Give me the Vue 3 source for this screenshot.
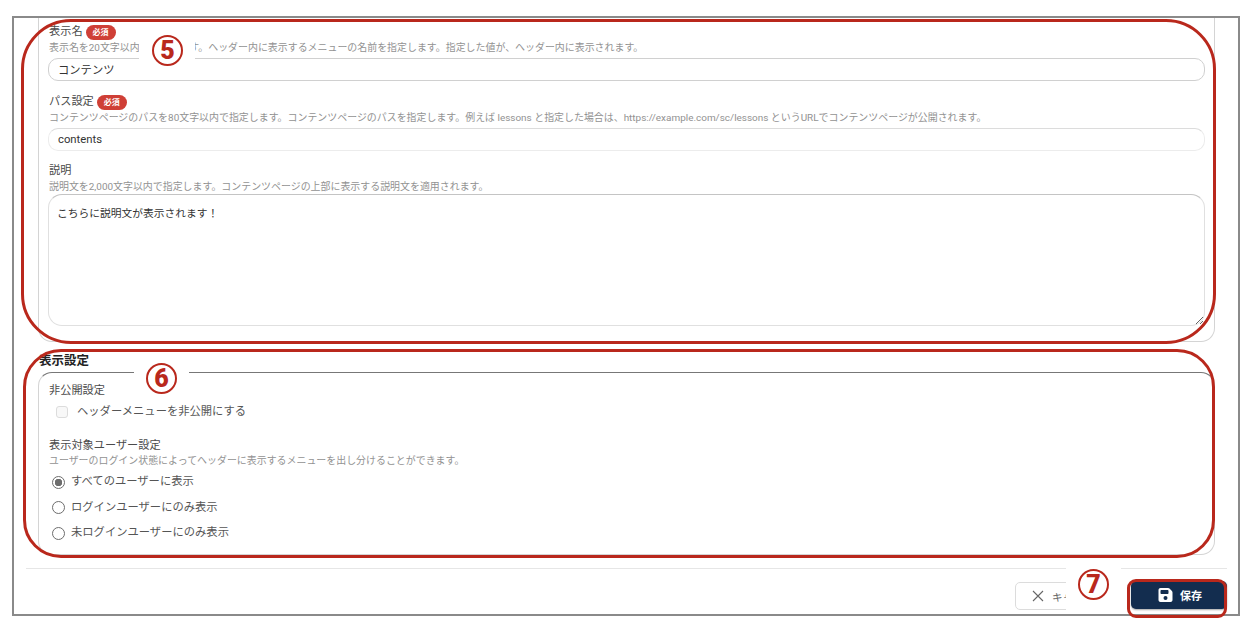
<template>
  <div class="page">
    <div class="frame">
      <section class="card card-top">
        <div class="field">
          <div class="label-row">
            <span class="label">表示名</span>
            <span class="badge">必須</span>
          </div>
          <p class="hint">表示名を20文字以内で指定します。ヘッダー内に表示するメニューの名前を指定します。指定した値が、ヘッダー内に表示されます。</p>
          <input class="text-input" type="text" value="コンテンツ" />
        </div>
        <div class="field">
          <div class="label-row">
            <span class="label">パス設定</span>
            <span class="badge">必須</span>
          </div>
          <p class="hint">コンテンツページのパスを80文字以内で指定します。コンテンツページのパスを指定します。例えば lessons と指定した場合は、https://example.com/sc/lessons というURLでコンテンツページが公開されます。</p>
          <input class="text-input faint" type="text" value="contents" />
        </div>
        <div class="field last">
          <div class="label-row">
            <span class="label">説明</span>
          </div>
          <p class="hint tight">説明文を2,000文字以内で指定します。コンテンツページの上部に表示する説明文を適用されます。</p>
          <textarea class="text-area" :value="description"></textarea>
        </div>
      </section>

      <h2 class="section-title">表示設定</h2>
      <section class="card card-bottom">
        <div class="label-row">
          <span class="label">非公開設定</span>
        </div>
        <div class="check-row">
          <span class="check"></span>
          <span class="option">ヘッダーメニューを非公開にする</span>
        </div>
        <div class="label-row target-label">
          <span class="label">表示対象ユーザー設定</span>
        </div>
        <p class="hint">ユーザーのログイン状態によってヘッダーに表示するメニューを出し分けることができます。</p>
        <div class="radio-list">
          <div class="radio-row" v-for="item in targets" :key="item.text">
            <span class="radio" :class="{ on: item.checked }"></span>
            <span class="option">{{ item.text }}</span>
          </div>
        </div>
      </section>

      <footer class="footer">
        <button class="btn cancel">
          <svg class="x-icon" viewBox="0 0 12 12"><path d="M1 1l10 10M11 1L1 11" /></svg>
          キャンセル
        </button>
        <button class="btn save">
          <svg class="save-icon" viewBox="0 0 448 512"><path d="M64 32C28.7 32 0 60.7 0 96V416c0 35.3 28.7 64 64 64H384c35.3 0 64-28.7 64-64V173.3c0-17-6.7-33.3-18.7-45.3L352 50.7C340 38.7 323.7 32 306.7 32H64zm0 96c0-17.7 14.3-32 32-32H288c17.7 0 32 14.3 32 32v64c0 17.7-14.3 32-32 32H96c-17.7 0-32-14.3-32-32V128zM224 288a64 64 0 1 1 0 128 64 64 0 1 1 0-128z" /></svg>
          保存
        </button>
      </footer>
    </div>

    <!-- annotations drawn over the screenshot -->
    <div class="mark box-five"></div>
    <div class="mark box-six"></div>
    <div class="mark box-seven"></div>
    <div class="mask mask-five"></div>
    <div class="mask mask-six"></div>
    <div class="mask mask-seven"></div>
    <span class="num num-five">5</span>
    <span class="num num-six">6</span>
    <span class="num num-seven">7</span>
  </div>
</template>

<script setup>
const description = 'こちらに説明文が表示されます！';
const targets = [
  { text: 'すべてのユーザーに表示', checked: true },
  { text: 'ログインユーザーにのみ表示', checked: false },
  { text: '未ログインユーザーにのみ表示', checked: false },
];
</script>

<style>
body {
  margin: 0;
  background: #fff;
}
</style>

<style scoped>
.page {
  position: relative;
  width: 1260px;
  height: 628px;
  overflow: hidden;
  padding: 16px 0 0 12px;
  box-sizing: border-box;
  font-family: Roboto, "Noto Sans CJK JP", sans-serif;
  color: #333;
}

.frame {
  width: 1228px;
  height: 600px;
  box-sizing: border-box;
  border: 2px solid #8a8a8a;
  padding: 0 11px 0 12px;
  overflow: hidden;
  background: #fff;
}

.card {
  margin: 0 12px;
  border: 1px solid #d4d4d4;
  box-sizing: border-box;
  padding: 0 9px 0 9px;
}

.card-top {
  height: 324px;
  padding-top: 5px;
  border-top: none;
  border-radius: 0 0 14px 14px;
}

.card-bottom {
  height: 183px;
  padding-top: 9px;
  border-top-color: #777;
  border-radius: 14px;
}

.field + .field {
  margin-top: 12px;
}

.field.last {
  margin-top: 11px;
}

.label-row {
  display: flex;
  align-items: center;
  gap: 3px;
  height: 16px;
  padding: 1px 0 0 1px;
}

.label {
  font-size: 11.2px;
  line-height: 16px;
  color: #4a4a4a;
}

.badge {
  flex: none;
  height: 15px;
  line-height: 15px;
  padding: 0 7px;
  border-radius: 8px;
  background: #cf3f36;
  color: #fff;
  font-size: 8px;
  font-weight: 700;
}

.hint {
  margin: 1px 0 3px;
  padding-left: 1px;
  font-size: 9.95px;
  line-height: 14px;
  color: #929292;
  white-space: nowrap;
}

.hint.tight {
  margin-bottom: 0;
}

.text-input {
  display: block;
  width: 100%;
  height: 23px;
  box-sizing: border-box;
  padding: 0 9px 2px;
  border: 1px solid #d0d0d0;
  border-radius: 10px;
  outline: none;
  background: #fff;
  font: 11.3px Roboto, "Noto Sans CJK JP", sans-serif;
  color: #333;
}

.text-input.faint {
  padding-bottom: 0;
  border-color: #ececec;
  border-top-color: #dcdcdc;
}

.text-area {
  display: block;
  width: 100%;
  height: 132px;
  box-sizing: border-box;
  padding: 11px 8px;
  border: 1px solid #e0e0e0;
  border-top-color: #c4c4c4;
  border-radius: 14px;
  outline: none;
  background: #fff;
  font: 10.75px/16px Roboto, "Noto Sans CJK JP", sans-serif;
  color: #333;
}

.section-title {
  margin: 12px 0 4px 13px;
  font-size: 12.5px;
  line-height: 14px;
  font-weight: 700;
  color: #222;
}

.check-row {
  display: flex;
  align-items: center;
  gap: 9px;
  height: 16px;
  margin: 5px 0 0 8px;
}

.check {
  width: 12px;
  height: 12px;
  box-sizing: border-box;
  border: 1px solid #dcdcdc;
  border-radius: 3px;
  background: #f8f8f8;
}

.option {
  font-size: 11.3px;
  line-height: 16px;
  color: #555;
}

.target-label {
  margin-top: 17px;
}

.target-label + .hint {
  margin: 0;
}

.radio-list {
  display: flex;
  flex-direction: column;
  gap: 9.5px;
  margin: 6px 0 0 4px;
}

.radio-row {
  display: flex;
  align-items: center;
  gap: 6px;
  height: 16px;
}

.radio {
  width: 13px;
  height: 13px;
  box-sizing: border-box;
  border: 1.5px solid #6d6d6d;
  border-radius: 50%;
  background: #fff;
}

.radio.on {
  background: radial-gradient(circle, #6d6d6d 0 3.5px, #fff 4px);
}

.footer {
  display: flex;
  justify-content: flex-end;
  align-items: flex-start;
  gap: 11px;
  margin-top: 13px;
  padding-top: 12px;
  border-top: 1px solid #e6e6e6;
}

.btn {
  display: flex;
  align-items: center;
  height: 28px;
  box-sizing: border-box;
  border-radius: 5px;
  font-family: inherit;
  font-size: 10.5px;
}

.cancel {
  width: 105px;
  margin-top: 1px;
  padding: 0 0 0 16px;
  gap: 8px;
  border: 1px solid #dcdcdc;
  background: #fff;
  color: #666;
}

.x-icon {
  width: 12px;
  height: 12px;
  fill: none;
  stroke: #666;
  stroke-width: 1.1;
}

.save {
  width: 96px;
  padding: 0 0 0 27px;
  gap: 7px;
  border: none;
  background: #132d4f;
  color: #fff;
  font-size: 11px;
  font-weight: 700;
  box-shadow: 0 1px 2px rgba(0, 0, 0, 0.35);
}

.save-icon {
  width: 15px;
  height: 16px;
  fill: #fff;
}

.mark {
  position: absolute;
  box-sizing: border-box;
  border: 3px solid #b9281c;
}

.box-five {
  left: 21px;
  top: 19px;
  width: 1195px;
  height: 325px;
  border-radius: 50px;
}

.box-six {
  left: 23px;
  top: 349px;
  width: 1192px;
  height: 209px;
  border-radius: 38px;
}

.box-seven {
  left: 1127px;
  top: 579px;
  width: 100px;
  height: 39px;
  border-radius: 9px;
}

.mask {
  position: absolute;
  background: #fff;
}

.mask-five {
  left: 139px;
  top: 36px;
  width: 56px;
  height: 30px;
}

.mask-six {
  left: 134px;
  top: 362px;
  width: 55px;
  height: 32px;
}

.mask-seven {
  left: 1066px;
  top: 566px;
  width: 55px;
  height: 46px;
}

.num {
  position: absolute;
  width: 31px;
  height: 31px;
  box-sizing: border-box;
  border: 2px solid #b9281c;
  border-radius: 50%;
  font-family: Roboto, sans-serif;
  font-size: 25px;
  line-height: 27px;
  font-weight: 900;
  text-align: center;
  color: #b9281c;
}

.num-five {
  left: 152px;
  top: 35px;
}

.num-six {
  left: 146px;
  top: 363px;
}

.num-seven {
  left: 1078px;
  top: 569px;
}
</style>
